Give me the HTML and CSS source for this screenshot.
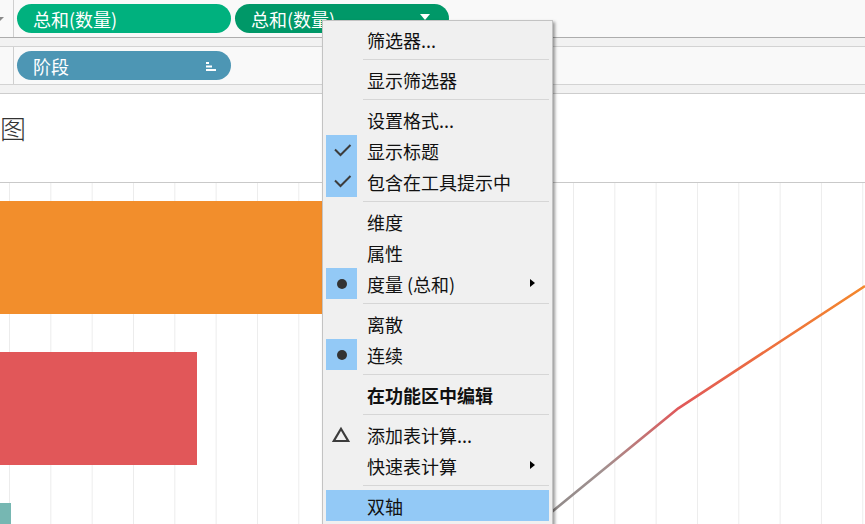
FILE: index.html
```html
<!DOCTYPE html>
<html lang="zh-CN">
<head>
<meta charset="utf-8">
<title>视图</title>
<link rel="stylesheet" href="styles.css">
</head>
<body>
<div class="app">
  <div class="shelf-row shelf-row--top">
    <div class="shelf-label"><span class="caret"></span></div>
    <div class="shelf-pills">
      <div class="pill pill--green"><span class="pill-text">总和(数量)</span></div>
      <div class="pill pill--green-dark"><span class="pill-text">总和(数量)</span><span class="pill-drop"></span></div>
    </div>
  </div>
  <div class="shelf-gap"></div>
  <div class="shelf-row">
    <div class="shelf-label"></div>
    <div class="shelf-pills">
      <div class="pill pill--blue">
        <span class="pill-text">阶段</span>
        <svg class="sort-icon" width="10" height="9" viewBox="0 0 10 9"><rect x="0" y="0" width="3" height="2" fill="#fff"/><rect x="0" y="3.5" width="6" height="2" fill="#fff"/><rect x="0" y="7" width="10" height="2" fill="#fff"/></svg>
      </div>
    </div>
  </div>
  <div class="shelf-gap shelf-gap--last"></div>

  <div class="view">
    <div class="view-title">图</div>
    <div class="plot">
      <div class="pane pane--bars">
        <div class="bar bar--orange" style="width:430px"></div>
        <div class="bar bar--red" style="width:197px"></div>
        <div class="bar bar--teal" style="width:11px"></div>
      </div>
      <div class="pane pane--line">
        <svg class="line-chart" width="425" height="341" viewBox="0 0 425 341">
          <defs>
            <linearGradient id="lg" gradientUnits="userSpaceOnUse" x1="97" y1="0" x2="425" y2="0">
              <stop offset="0" stop-color="#8a8887"/>
              <stop offset="0.2" stop-color="#a29190"/>
              <stop offset="0.43" stop-color="#e0585a"/>
              <stop offset="0.68" stop-color="#ec6d40"/>
              <stop offset="1" stop-color="#f4882c"/>
            </linearGradient>
          </defs>
          <polyline points="97,341 238.3,225.3 425,103" fill="none" stroke="url(#lg)" stroke-width="2.6" stroke-linejoin="round"/>
        </svg>
      </div>
    </div>
  </div>

  <div class="menu">
    <div class="menu-item"><span class="menu-gutter"></span><span class="menu-label">筛选器...</span></div>
    <div class="menu-sep"></div>
    <div class="menu-item"><span class="menu-gutter"></span><span class="menu-label">显示筛选器</span></div>
    <div class="menu-sep"></div>
    <div class="menu-item"><span class="menu-gutter"></span><span class="menu-label">设置格式...</span></div>
    <div class="menu-item"><span class="menu-gutter is-on"><svg width="31" height="31" viewBox="0 0 31 31"><polyline points="9,14.5 14.5,20 24.5,10" fill="none" stroke="#3c3c3c" stroke-width="2"/></svg></span><span class="menu-label">显示标题</span></div>
    <div class="menu-item"><span class="menu-gutter is-on"><svg width="31" height="31" viewBox="0 0 31 31"><polyline points="9,14.5 14.5,20 24.5,10" fill="none" stroke="#3c3c3c" stroke-width="2"/></svg></span><span class="menu-label">包含在工具提示中</span></div>
    <div class="menu-sep"></div>
    <div class="menu-item"><span class="menu-gutter"></span><span class="menu-label">维度</span></div>
    <div class="menu-item"><span class="menu-gutter"></span><span class="menu-label">属性</span></div>
    <div class="menu-item"><span class="menu-gutter is-on"><span class="dot"></span></span><span class="menu-label">度量 (总和)</span><span class="menu-arrow"></span></div>
    <div class="menu-sep"></div>
    <div class="menu-item"><span class="menu-gutter"></span><span class="menu-label">离散</span></div>
    <div class="menu-item"><span class="menu-gutter is-on"><span class="dot"></span></span><span class="menu-label">连续</span></div>
    <div class="menu-sep"></div>
    <div class="menu-item"><span class="menu-gutter"></span><span class="menu-label menu-label--bold">在功能区中编辑</span></div>
    <div class="menu-sep"></div>
    <div class="menu-item"><span class="menu-gutter"><svg width="31" height="31" viewBox="0 0 31 31"><polygon points="15,9.8 7.8,22 22.2,22" fill="none" stroke="#3c3c3c" stroke-width="2.2" stroke-linejoin="miter"/></svg></span><span class="menu-label">添加表计算...</span></div>
    <div class="menu-item"><span class="menu-gutter"></span><span class="menu-label">快速表计算</span><span class="menu-arrow"></span></div>
    <div class="menu-sep"></div>
    <div class="menu-item is-hl"><span class="menu-gutter"></span><span class="menu-label">双轴</span></div>
  </div>
</div>
</body>
</html>
```

FILE: styles.css
```css
* { box-sizing: border-box; }
html, body { margin: 0; padding: 0; }
body {
  width: 865px;
  height: 524px;
  overflow: hidden;
  background: #ffffff;
  font-family: "Noto Sans CJK SC", "Noto Sans", sans-serif;
}
.app {
  position: relative;
  width: 865px;
  height: 524px;
  overflow: hidden;
}

/* shelves */
.shelf-row {
  display: flex;
  height: 38px;
  background: #f9f9f9;
  border-bottom: 1px solid #d3d3d3;
}
.shelf-row--top { border-bottom-color: #adadad; }
.shelf-label {
  width: 14px;
  flex: none;
  border-right: 1px solid #cfcfcf;
  display: flex;
  align-items: center;
  overflow: hidden;
}
.caret {
  width: 0;
  height: 0;
  margin-left: -4px;
  margin-top: 1px;
  border-left: 4px solid transparent;
  border-right: 4px solid transparent;
  border-top: 4px solid #8a8a8a;
}
.shelf-gap {
  height: 9px;
  background: #f2f2f2;
  border-bottom: 1px solid #d3d3d3;
}
.shelf-gap--last { border-bottom-color: #cdcdcd; }
.shelf-pills {
  display: flex;
  align-items: center;
  gap: 4px;
  padding-left: 3px;
}
.pill {
  width: 214px;
  height: 29px;
  border-radius: 15px;
  display: flex;
  align-items: center;
  padding: 0 15px 0 16px;
  color: #ffffff;
  font-size: 18px;
  line-height: 1;
}
.pill--green { background: #00b17e; }
.pill--green-dark { background: #009868; }
.pill--blue { background: #4d96b4; }
.pill-text { flex: 1; }
.pill-drop {
  width: 0;
  height: 0;
  margin-right: 4px;
  margin-top: -4px;
  border-left: 5px solid transparent;
  border-right: 5px solid transparent;
  border-top: 6px solid #ffffff;
}
.sort-icon { display: block; margin-top: 1px; }

/* view */
.view { background: #ffffff; }
.view-title {
  height: 89px;
  border-bottom: 1px solid #c9c9c9;
  padding-top: 21px;
  font-size: 26px;
  line-height: 26px;
  color: #333333;
  font-weight: 300;
}
.plot {
  display: flex;
  height: 341px;
}
.pane {
  height: 341px;
  overflow: hidden;
  background-image: linear-gradient(to right, #ececec 0, #ececec 1px, transparent 1px);
  background-size: 41.33px 100%;
  background-position: 9px 0;
}
.pane--bars {
  width: 440px;
  padding-top: 18px;
}
.pane--line { width: 425px; }
.bar {
  height: 113px;
  margin-bottom: 38px;
}
.bar--orange { background: #f28e2c; }
.bar--red { background: #e15759; }
.bar--teal { background: #76b7b2; }
.line-chart { display: block; overflow: visible; }

/* context menu */
.menu {
  position: absolute;
  left: 322px;
  top: 20px;
  width: 231px;
  background: #f0f0f0;
  border: 1px solid #c3c3c3;
  padding: 3px;
  box-shadow: 2px 2px 3px rgba(0, 0, 0, 0.4);
  font-size: 18px;
  color: #111111;
}
.menu-item {
  height: 31px;
  display: flex;
  align-items: center;
}
.menu-item.is-hl { background: #93c9f6; }
.menu-gutter {
  width: 31px;
  height: 31px;
  flex: none;
  display: flex;
  align-items: center;
  justify-content: center;
}
.menu-gutter.is-on { background: #93c9f6; }
.menu-gutter svg { display: block; }
.dot {
  width: 10px;
  height: 10px;
  border-radius: 50%;
  background: #333333;
  margin-top: 1px;
}
.menu-label {
  padding-left: 10px;
  line-height: 1;
  margin-top: 1px;
}
.menu-label--bold { font-weight: 700; }
.menu-arrow {
  width: 0;
  height: 0;
  margin-left: auto;
  margin-right: 14px;
  margin-top: -1px;
  border-left: 5px solid #000000;
  border-top: 4.5px solid transparent;
  border-bottom: 4.5px solid transparent;
}
.menu-sep {
  height: 1px;
  background: #d6d6d6;
  margin: 4px 0 4px 37px;
}
```
